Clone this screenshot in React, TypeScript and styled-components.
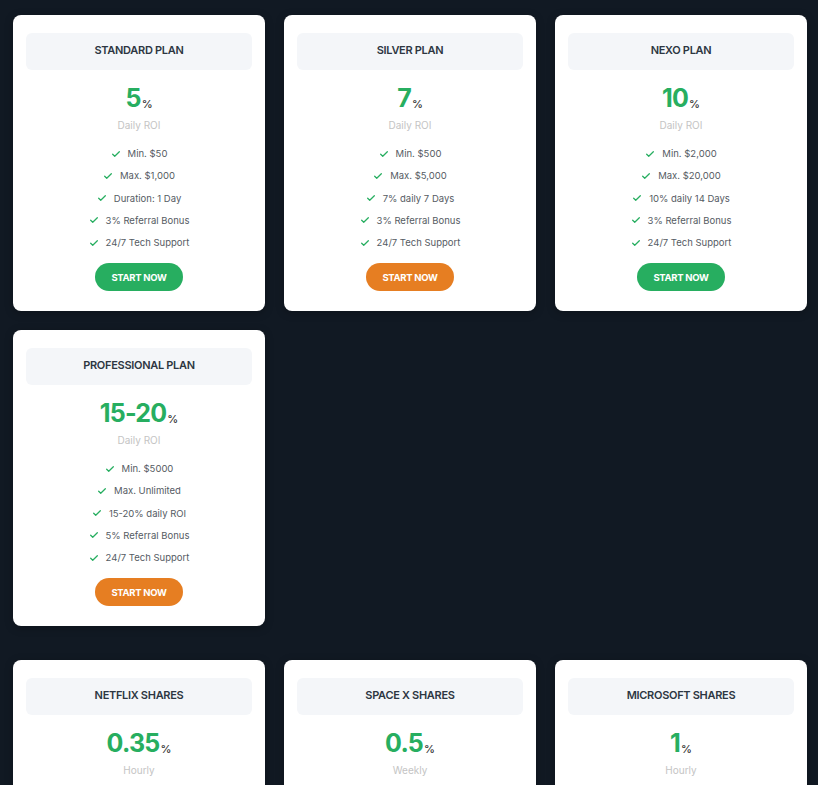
import React from 'react';
import styled, { createGlobalStyle } from 'styled-components';

const GlobalStyle = createGlobalStyle`
  html, body {
    margin: 0;
    padding: 0;
    background: #111923;
    font-family: Inter, "Noto Sans", sans-serif;
  }
`;

const Page = styled.div`
  padding: 15px 13px 40px;
  display: flex;
  flex-direction: column;
  gap: 34px;
`;

const Grid = styled.div`
  display: grid;
  grid-template-columns: repeat(3, 252px);
  gap: 19px;
`;

const Card = styled.div`
  background: #ffffff;
  border-radius: 8px;
  padding: 18px 13px 20px;
  display: flex;
  flex-direction: column;
  align-items: center;
  box-shadow: 0 2px 8px rgba(0, 0, 0, 0.25);
`;

const PlanHeader = styled.div`
  align-self: stretch;
  height: 37px;
  padding-bottom: 3px;
  box-sizing: border-box;
  background: #f4f6f9;
  border-radius: 6px;
  display: flex;
  align-items: center;
  justify-content: center;
  font-size: 11px;
  font-weight: 600;
  color: #2d3642;
  letter-spacing: -0.3px;
`;

const Rate = styled.div`
  margin-top: 13px;
  height: 30px;
  display: flex;
  align-items: baseline;
  color: #27ae60;
  font-size: 25px;
  font-weight: 700;
  letter-spacing: -0.8px;
`;

const Percent = styled.span`
  font-size: 11px;
  font-weight: 500;
  color: #333;
  margin-left: 1px;
  letter-spacing: 0;
  position: relative;
  top: 1px;
`;

const Period = styled.div`
  margin-top: 6px;
  font-size: 10px;
  color: #c4c4c4;
`;

const Features = styled.ul`
  list-style: none;
  margin: 16px 0 0;
  padding: 0;
  display: flex;
  flex-direction: column;
  align-items: center;
  gap: 9.25px;
`;

const Feature = styled.li`
  display: flex;
  align-items: center;
  gap: 7px;
  font-size: 9.5px;
  line-height: 13px;
  color: #555b63;
`;

const Check = styled.svg`
  width: 10px;
  height: 10px;
  flex: none;
`;

const StartButton = styled.button<{ $tone: 'green' | 'orange' }>`
  margin-top: 14px;
  width: 88px;
  height: 28px;
  border: none;
  border-radius: 14px;
  background: ${(p) => (p.$tone === 'green' ? '#27ae60' : '#e67e22')};
  color: #fff;
  font-family: inherit;
  font-size: 9.5px;
  font-weight: 700;
  letter-spacing: -0.3px;
  cursor: pointer;
`;

type Plan = {
  name: string;
  rate: string;
  period: string;
  features: string[];
  tone: 'green' | 'orange';
};

const plans: Plan[] = [
  {
    name: 'STANDARD PLAN',
    rate: '5',
    period: 'Daily ROI',
    features: ['Min. $50', 'Max. $1,000', 'Duration: 1 Day', '3% Referral Bonus', '24/7 Tech Support'],
    tone: 'green',
  },
  {
    name: 'SILVER PLAN',
    rate: '7',
    period: 'Daily ROI',
    features: ['Min. $500', 'Max. $5,000', '7% daily 7 Days', '3% Referral Bonus', '24/7 Tech Support'],
    tone: 'orange',
  },
  {
    name: 'NEXO PLAN',
    rate: '10',
    period: 'Daily ROI',
    features: ['Min. $2,000', 'Max. $20,000', '10% daily 14 Days', '3% Referral Bonus', '24/7 Tech Support'],
    tone: 'green',
  },
  {
    name: 'PROFESSIONAL PLAN',
    rate: '15-20',
    period: 'Daily ROI',
    features: ['Min. $5000', 'Max. Unlimited', '15-20% daily ROI', '5% Referral Bonus', '24/7 Tech Support'],
    tone: 'orange',
  },
];

const shares: Plan[] = [
  {
    name: 'NETFLIX SHARES',
    rate: '0.35',
    period: 'Hourly',
    features: ['Min. $1,000', 'Max. $10,000', 'Duration: 24 Hours', '3% Referral Bonus', '24/7 Tech Support'],
    tone: 'green',
  },
  {
    name: 'SPACE X SHARES',
    rate: '0.5',
    period: 'Weekly',
    features: ['Min. $5,000', 'Max. $50,000', 'Duration: 4 Weeks', '3% Referral Bonus', '24/7 Tech Support'],
    tone: 'orange',
  },
  {
    name: 'MICROSOFT SHARES',
    rate: '1',
    period: 'Hourly',
    features: ['Min. $10,000', 'Max. Unlimited', 'Duration: 24 Hours', '3% Referral Bonus', '24/7 Tech Support'],
    tone: 'green',
  },
];

const CheckIcon = () => (
  <Check viewBox="0 0 24 24" fill="none" stroke="#27ae60" strokeWidth="3" strokeLinecap="round" strokeLinejoin="round">
    <path d="M4 12.5l5 5L20 6.5" />
  </Check>
);

const PlanCard = ({ plan }: { plan: Plan }) => (
  <Card>
    <PlanHeader>{plan.name}</PlanHeader>
    <Rate>
      {plan.rate}
      <Percent>%</Percent>
    </Rate>
    <Period>{plan.period}</Period>
    <Features>
      {plan.features.map((f) => (
        <Feature key={f}>
          <CheckIcon />
          {f}
        </Feature>
      ))}
    </Features>
    <StartButton $tone={plan.tone}>START NOW</StartButton>
  </Card>
);

export default function App() {
  return (
    <>
      <GlobalStyle />
      <Page>
        <Grid>
          {plans.map((p) => (
            <PlanCard key={p.name} plan={p} />
          ))}
        </Grid>
        <Grid>
          {shares.map((p) => (
            <PlanCard key={p.name} plan={p} />
          ))}
        </Grid>
      </Page>
    </>
  );
}
